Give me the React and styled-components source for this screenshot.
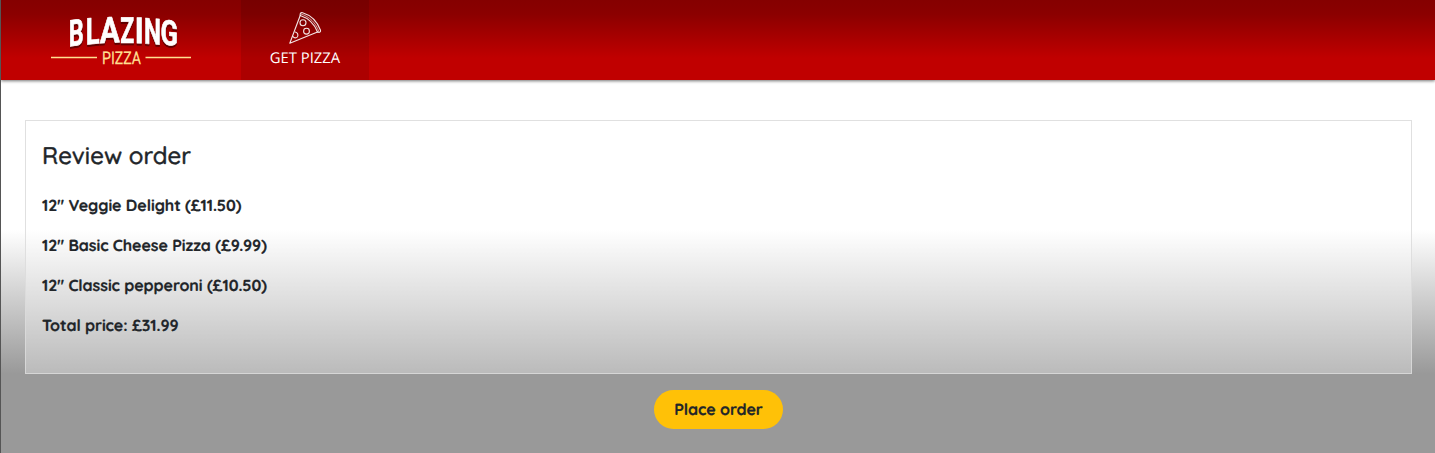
import React from "react";
import styled, { createGlobalStyle } from "styled-components";

const GlobalStyle = createGlobalStyle`
  * { box-sizing: border-box; }
  body {
    margin: 0;
    font-family: Quicksand, Lato, sans-serif;
    color: #212529;
    text-rendering: geometricPrecision;
  }
`;

const Page = styled.div`
  height: 453px;
  overflow: hidden;
  border-left: 1px solid #555;
  background: linear-gradient(#fff 230px, #999 374px);
`;

const TopBar = styled.header`
  height: 80px;
  display: flex;
  align-items: stretch;
  background: linear-gradient(#850000 0, #8b0000 14px, #c00000 58px, #c00000 100%);
  box-shadow: 0 1px 3px rgba(0, 0, 0, 0.55);
`;

const Logo = styled.svg`
  width: 140px;
  height: 80px;
  margin: 0 50px;
  flex: none;
`;

const Wordmark = styled.g`
  font-weight: 700;
  filter: drop-shadow(0.5px 2px 0.6px #600000);
`;

const NavTab = styled.a`
  width: 128px;
  display: flex;
  flex-direction: column;
  align-items: center;
  padding-top: 11px;
  background: rgba(0, 0, 0, 0.1);
  color: #fff;
  font: 14.8px/20px "Open Sans", sans-serif;
  text-decoration: none;
`;

const SliceIcon = styled.svg`
  width: 34px;
  height: 34px;
  margin-bottom: 3px;
`;

const Main = styled.main`
  padding: 40px 23px 0 24px;
  display: flex;
  flex-direction: column;
  align-items: center;
`;

const Panel = styled.section`
  align-self: stretch;
  height: 254px;
  padding: 19px 16px;
  border: 1px solid rgba(218, 218, 218, 0.85);
  background: rgba(255, 255, 255, 0.33);
`;

const Title = styled.h2`
  margin: 0 0 23px;
  font-size: 24px;
  line-height: 30px;
  font-weight: 500;
  letter-spacing: 0.04px;
  -webkit-text-stroke: 0.45px #212529;
`;

const Line = styled.p`
  margin: 0 0 16px;
  font-size: 16px;
  line-height: 24px;
  font-weight: 700;
  letter-spacing: -0.07px;
  -webkit-text-stroke: 0.2px #212529;
`;

const OrderButton = styled.button`
  width: 129px;
  height: 39px;
  margin-top: 16px;
  padding: 0 0 2px;
  border: 0;
  border-radius: 20px;
  background: #ffc107;
  color: #212529;
  font: 700 16px/24px Quicksand, Lato, sans-serif;
  letter-spacing: -0.07px;
  text-rendering: geometricPrecision;
  -webkit-text-stroke: 0.2px #212529;
`;

const letters = [
  { c: "B", x: 17.7, w: 15, y: 46.6, size: 36.5, skew: -8 },
  { c: "L", x: 34.7, w: 13.8, y: 44.6, size: 36.5, skew: -5 },
  { c: "A", x: 48.7, w: 20, y: 43.2, size: 36, skew: -3 },
  { c: "Z", x: 69.3, w: 14, y: 42.9, size: 36, skew: 0 },
  { c: "I", x: 83.7, w: 9, y: 43, size: 36, skew: 2 },
  { c: "N", x: 93, w: 17, y: 43.4, size: 36, skew: 4 },
  { c: "G", x: 109.5, w: 17.5, y: 44.1, size: 34.5, skew: 6 },
];

const orders = [
  "12″ Veggie Delight (£11.50)",
  "12″ Basic Cheese Pizza (£9.99)",
  "12″ Classic pepperoni (£10.50)",
  "Total price: £31.99",
];

export default function App() {
  return (
    <>
      <GlobalStyle />
      <Page>
        <TopBar>
          <Logo viewBox="0 0 140 80" fontFamily="Roboto, sans-serif">
            <Wordmark>
              {letters.map((l) => (
                <text
                  key={l.c}
                  transform={`translate(${l.x} ${l.y}) skewY(${l.skew})`}
                  fontSize={l.size}
                  textLength={l.w}
                  lengthAdjust="spacingAndGlyphs"
                  fill="#fff"
                  stroke="#fff"
                  strokeWidth="0.7"
                  strokeLinejoin="round"
                >
                  {l.c}
                </text>
              ))}
            </Wordmark>
            <text x="51" y="63.8" fontSize="17.5" fontWeight="400" fill="#ffdf91" stroke="#ffdf91" strokeWidth="0.25" textLength="39" lengthAdjust="spacingAndGlyphs">PIZZA</text>
            <path d="M0 57.5H46M94.500 57.500H140" stroke="#ffdf91" strokeWidth="1.5" />
          </Logo>
          <NavTab>
            <SliceIcon viewBox="0 0 34 34" fill="none" stroke="#fff" strokeOpacity=".9" strokeWidth="1.1" strokeLinejoin="round" strokeLinecap="round">
              <path d="M12.200 4.500 1.800 32.200 29.500 21C26.500 13.200 20.500 7.200 12.200 4.500Z" />
              <path d="M12.200 4.500C11.800 2.500 12.800 1.200 14.600 1.700C23 4.200 29.500 11 32.500 19.200C33 21 31.500 22 29.500 21" />
              <path d="M13 3C21.700 5.600 28 12 30.800 20.500" strokeWidth=".7" />
              <circle cx="15" cy="11.800" r="3" />
              <circle cx="18.500" cy="20.200" r="2.900" />
              <path d="M7.200 21C9.500 21.500 10.500 23.800 9.500 25.700C8.400 27.300 6 27.400 5 25.500" />
            </SliceIcon>
            GET PIZZA
          </NavTab>
        </TopBar>
        <Main>
          <Panel>
            <Title>Review order</Title>
            {orders.map((text) => (
              <Line key={text}>{text}</Line>
            ))}
          </Panel>
          <OrderButton>Place order</OrderButton>
        </Main>
      </Page>
    </>
  );
}
